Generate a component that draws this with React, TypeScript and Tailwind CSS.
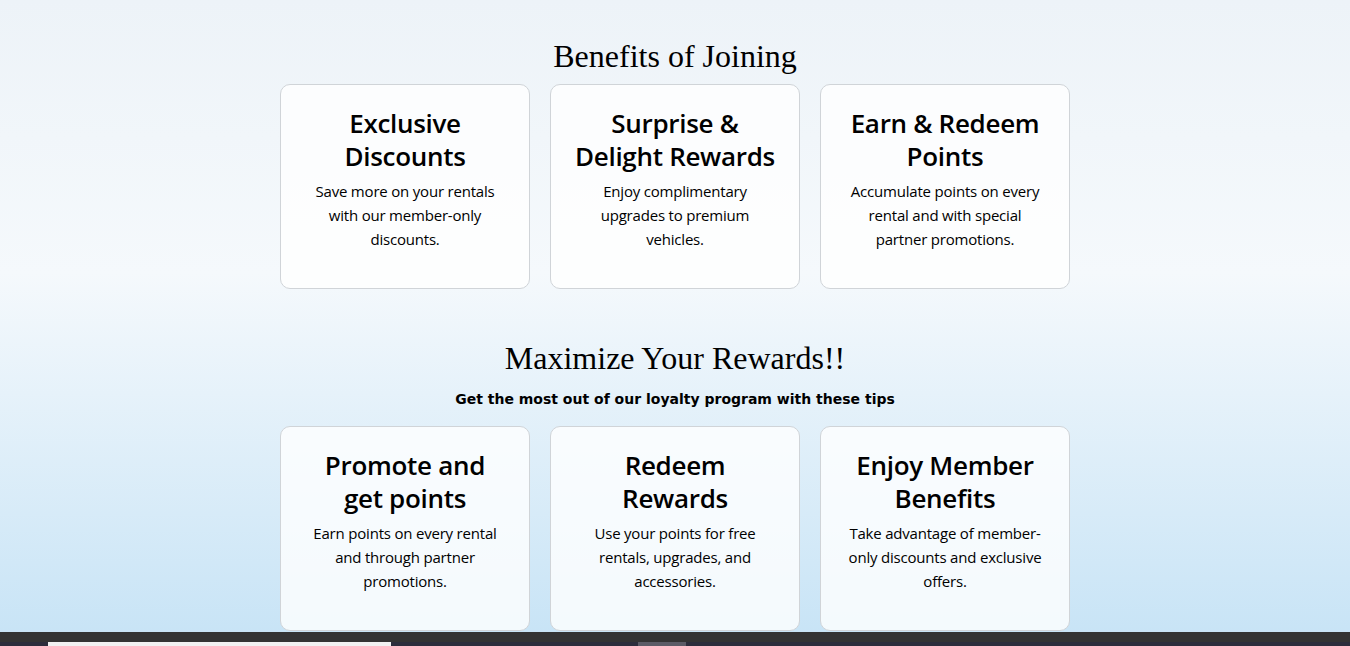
import React from 'react';

type Item = { title: string; text: string };

const benefits: Item[] = [
  { title: 'Exclusive Discounts', text: 'Save more on your rentals with our member-only discounts.' },
  { title: 'Surprise & Delight Rewards', text: 'Enjoy complimentary upgrades to premium vehicles.' },
  { title: 'Earn & Redeem Points', text: 'Accumulate points on every rental and with special partner promotions.' },
];

const tips: Item[] = [
  { title: 'Promote and get points', text: 'Earn points on every rental and through partner promotions.' },
  { title: 'Redeem Rewards', text: 'Use your points for free rentals, upgrades, and accessories.' },
  { title: 'Enjoy Member Benefits', text: 'Take advantage of member-only discounts and exclusive offers.' },
];

const Card: React.FC<{ item: Item }> = ({ item }) => (
  <div className="w-[250px] h-[205px] rounded-[10px] border border-[#d0d4d8] bg-white/80 px-[22px] pt-[22px] text-center font-['Open_Sans',sans-serif] text-black">
    <h3 className="text-[26px] leading-[33px] font-semibold tracking-[-0.3px]">{item.title}</h3>
    <p className="mt-[6px] text-[15px] leading-[24px] tracking-[-0.2px]">{item.text}</p>
  </div>
);

const App: React.FC = () => {
  return (
    <div className="min-h-[646px] flex flex-col bg-gradient-to-b from-[#edf3f8] via-[#f5f9fc] via-40% to-[#c2e1f5]">
      {/* Benefits */}
      <section className="pt-[36px] flex flex-col items-center">
        <h2 className="font-['Liberation_Serif',serif] text-[32px] leading-[40px] text-black">Benefits of Joining</h2>
        <div className="mt-[8px] flex gap-[20px]">
          {benefits.map((b) => (
            <Card key={b.title} item={b} />
          ))}
        </div>
      </section>

      {/* Tips */}
      <section className="pt-[49px] flex flex-col items-center">
        <h2 className="font-['Liberation_Serif',serif] text-[32px] leading-[40px] text-black">Maximize Your Rewards!!</h2>
        <p className="mt-[12px] font-['DejaVu_Sans',sans-serif] font-bold text-[14px] leading-[18px] text-black">
          Get the most out of our loyalty program with these tips
        </p>
        <div className="mt-[18px] flex gap-[20px]">
          {tips.map((t) => (
            <Card key={t.title} item={t} />
          ))}
        </div>
      </section>

      {/* Footer start */}
      <footer className="mt-[1px] bg-[#333333] pt-[10px]">
        <div className="h-[40px] bg-[#2c2d3c] flex">
          <div className="ml-[48px] w-[343px] bg-[#f1f1f1]" />
          <div className="ml-[247px] w-[48px] bg-[#5b5b66]" />
        </div>
      </footer>
    </div>
  );
};

export default App;
